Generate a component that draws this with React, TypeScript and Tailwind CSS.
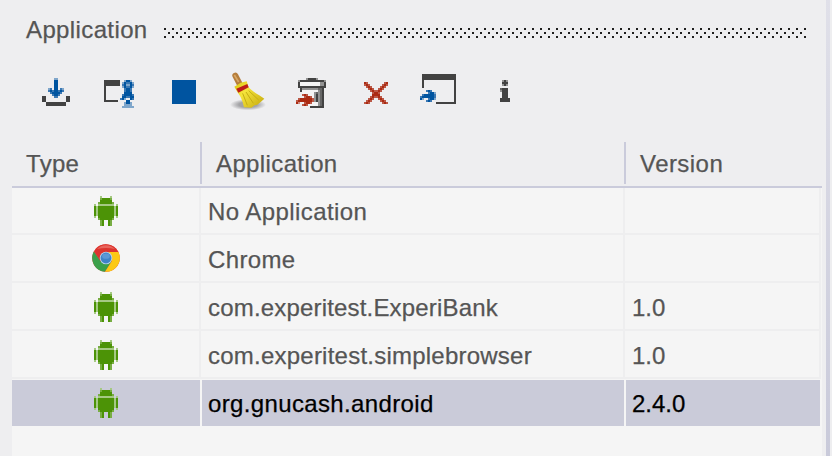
import React from "react";

const palette: Record<string, string> = {
  K: "#424242", k: "#666666", g: "#929292", w: "#f4f4f4",
  B: "#0054a0", b: "#3b78b3", l: "#7fa6cb",
  R: "#ab2a12", q: "#bb5846", r: "#cf8c80",
  G: "#4c9306", n: "#78ad43", m: "#a5c983",
};

function PixelIcon({ rows, className = "" }: { rows: string[]; className?: string }) {
  const width = Math.max(...rows.map((r) => r.length));
  return (
    <svg
      className={"shrink-0 " + className}
      width={width * 2}
      height={rows.length * 2}
      viewBox={`0 0 ${width} ${rows.length}`}
      shapeRendering="crispEdges"
      aria-hidden="true"
    >
      {rows.flatMap((row, y) =>
        [...row].map((c, x) =>
          palette[c] ? <rect key={x + "-" + y} x={x} y={y} width={1} height={1} fill={palette[c]} /> : null
        )
      )}
    </svg>
  );
}

const install = [
  "......ll......",
  "......BB......",
  "......BB......",
  "......BB......",
  "......BB......",
  "...lb.BB.bl...",
  "...bBbBBbBb...",
  "....bBBBBb....",
  ".....bBBb.....",
  "KK....bb....KK",
  "KK..........KK",
  "KK..........KK",
  "..KKKKKKKKKK..",
  "..KKKKKKKKKK..",
];
const instrument = [
  "KKKKKKKK..lBBl.",
  "KKKKKKKK.lBbbBl",
  "KKKKKKKK.bBllBb",
  "K........lBbbBl",
  "K.........bBBb.",
  "K.........bBBb.",
  "K.........BBBB.",
  "K........bBBBBb",
  "K........BBbbBB",
  "K.......bBl..Bb",
  "KKKKKKK....BB..",
  "..........lBBl.",
  "..........llll.",
  ".........llllll",
];
const uninstall = [
  ".....gKKKKg....",
  ".gKKKKKKKKKKKKg",
  ".KwwwwwwwwwwggK",
  ".KwwwwwwwwwwggK",
  ".KKKKKKKKKKKKKK",
  "..KggggggggkkK.",
  "..KwwwwwwwwgkK.",
  "...wwwwwwgkgkK.",
  "...qRqwwwgKgkK.",
  "....qRRqwgKgkK.",
  ".qRRRRRRqgKgkK.",
  "qRRRRRRRqgKgkK.",
  "Rr..qRRqwwwgkK.",
  "...qRqwwwwwgkK.",
  ".......KKKKKKK.",
];
const remove = [
  "Rq........qR",
  "qRq......qRq",
  ".qRq....qRq.",
  "..qRq..qRq..",
  "...qRqqRq...",
  "....qRRq....",
  "....RRRR....",
  "...qRqqRq...",
  "..qRq..qRq..",
  ".qRq....qRq.",
  "qRq......qRq",
];
const launch = [
  ".KKKKKKKKKKKKKKKKK",
  ".KKKKKKKKKKKKKKKKK",
  ".KKKKKKKKKKKKKKKKK",
  ".K...............K",
  ".K...............K",
  ".K...............K",
  ".K...............K",
  ".................K",
  "...bBb...........K",
  "....bBBl.........K",
  ".bBBBBBb.........K",
  "bBBBBBBb.........K",
  "Bl..bBBl.........K",
  "...bBb...........K",
  "........KKKKKKKKKK",
];
const info = [
  ".gKg.",
  ".KKK.",
  ".gKg.",
  ".....",
  "kKKK.",
  "gKKK.",
  ".KKK.",
  ".KKK.",
  ".KKK.",
  "KKKKK",
  "KKKKK",
];
const android = [
  "...m....m...",
  "...nGGGGn...",
  "...GGGGGG...",
  "..nGGGGGGn..",
  "m.mmmmmmmm.m",
  "GmGGGGGGGGmG",
  "GmGGGGGGGGmG",
  "GmGGGGGGGGmG",
  "GmGGGGGGGGmG",
  "GmGGGGGGGGmG",
  "m.GGGGGGGG.m",
  "..nGGGGGGn..",
  "...nG..Gn...",
  "...nG..Gn...",
  "...nG..Gn...",
];

function Broom() {
  return (
    <svg className="ml-7 -mt-2 shrink-0" width="36" height="42" viewBox="210 24 108 126" aria-hidden="true">
      <defs>
        <radialGradient id="shade">
          <stop offset="0.5" stopColor="#a3a3a6" />
          <stop offset="1" stopColor="#a3a3a6" stopOpacity="0" />
        </radialGradient>
        <linearGradient id="straw" x1="0" y1="0" x2="1" y2="0.8">
          <stop offset="0" stopColor="#d8c40c" />
          <stop offset="0.4" stopColor="#f5e43c" />
          <stop offset="1" stopColor="#cbb012" />
        </linearGradient>
      </defs>
      <ellipse cx="264" cy="128" rx="54" ry="17" fill="url(#shade)" />
      <path d="M226 41L238 64" stroke="#b57d3c" strokeWidth="18" strokeLinecap="round" />
      <path d="M223 39L236 60" stroke="#d8a765" strokeWidth="5" />
      <path d="M223 74L242 62L260 58L266 76C280 92 298 98 313 110L302 120L292 128L284 130L274 137L252 136C248 118 244 106 232 90Z" fill="url(#straw)" />
      <path d="M248 94L262 130M258 90L280 124M266 86L296 114" stroke="#c5ae14" strokeWidth="3" fill="none" />
      <path d="M229 80L262 66L266 76L235 92Z" fill="#bd1d19" />
    </svg>
  );
}

function Chrome() {
  return (
    <svg width="28" height="28" viewBox="-14 -14 28 28" aria-hidden="true">
      <circle r="13.8" fill="#e33b32" />
      <path d="M-12.2 -6.5A13.8 13.8 0 0 0 -1 13.8L5.6 3.3L-5.5 3.3Z" fill="#3ba04a" />
      <path d="M12.4 -6A13.8 13.8 0 0 1 -1 13.8L5.7 3.3L2.5 -6Z" fill="#fcc914" />
      <path d="M-11.5 -7.4A13.8 13.8 0 0 1 12.4 -6L0 -6L-6 2Z" fill="#dc342e" />
      <path d="M-9 -9A12.5 12.5 0 0 1 9 -9Q0 -11 -9 -9Z" fill="#e8655c" />
      <circle r="6.3" fill="#b9d1ea" />
      <circle r="5.4" fill="#3f83c8" />
      <ellipse cy="-1.8" rx="3.8" ry="2.6" fill="#5c98d6" />
    </svg>
  );
}

const apps = [
  { name: "No Application", version: "", spacing: "tracking-[0.42px]" },
  { name: "Chrome", version: "", spacing: "tracking-[0.35px]" },
  { name: "com.experitest.ExperiBank", version: "1.0", spacing: "tracking-[0.18px]" },
  { name: "com.experitest.simplebrowser", version: "1.0", spacing: "tracking-[0.23px]" },
];

export default function App() {
  return (
    <div className="flex h-[456px] w-[832px] overflow-hidden bg-[#eeeef0] font-['Liberation_Sans',Arial,sans-serif] text-[24px] leading-[28px] text-[#555] [-webkit-text-stroke:0.25px]">
      <main className="flex w-[822px] shrink-0 flex-col pl-3">
        <div className="flex h-[60px] items-center pl-3.5">
          <h1 className="w-[138px] shrink-0 tracking-[0.38px]">Application</h1>
          <svg className="mt-[6px]" width="642" height="10" shapeRendering="crispEdges" aria-hidden="true">
            <defs>
              <pattern id="dots" width="8" height="10" patternUnits="userSpaceOnUse">
                <path d="M0 0h2v2H0zM4 4h2v2H4zM0 8h2v2H0z" fill="#1e1e1e" />
              </pattern>
            </defs>
            <rect width="642" height="10" fill="url(#dots)" />
          </svg>
        </div>
        <div className="flex h-[82px] items-start pl-[30px] pt-[18px]">
          <PixelIcon rows={install} />
          <PixelIcon rows={instrument} className="ml-[34px] mt-0.5" />
          <div className="ml-[38px] mt-0.5 size-6 shrink-0 bg-[#0054a0]" />
          <div className="ml-[6px] flex"><Broom /></div>
          <PixelIcon rows={uninstall} className="ml-[30px]" />
          <PixelIcon rows={remove} className="ml-[38px] mt-1" />
          <PixelIcon rows={launch} className="ml-8 -mt-1" />
          <PixelIcon rows={info} className="ml-11 mt-0.5" />
        </div>
        <div className="flex h-[46px] border-b-2 border-[#cacbdb] leading-[44px]">
          <div className="w-[188px] pl-3.5 tracking-[0.3px]">Type</div>
          <div className="h-[42px] w-[424px] border-l-2 border-[#cacbdb] pl-3.5 tracking-[0.38px]">Application</div>
          <div className="h-[42px] border-l-2 border-[#cacbdb] pl-3.5 tracking-[0.45px]">Version</div>
        </div>
        <div className="flex-1 bg-[#f5f5f5]">
          {apps.map((app, i) => (
            <div key={app.name} className={(i === 0 ? "h-[47px]" : "h-12") + " flex w-[809px]"}>
              <div className="flex w-[189px] items-center justify-center border-b-2 border-r-2 border-[#eeeeef]">
                {app.name === "Chrome" ? <Chrome /> : <PixelIcon rows={android} className={i === 0 ? "mt-px" : "mt-0.5"} />}
              </div>
              <div className="flex w-[424px] items-end border-b-2 border-r-2 border-[#eeeeef] pb-[7px] pl-[7px]">
                <span className={app.spacing}>{app.name}</span>
              </div>
              <div className="flex flex-1 items-end border-b-2 border-r-2 border-[#eeeeef] pb-[7px] pl-[7px]">{app.version}</div>
            </div>
          ))}
          <div className="mt-px flex h-[46px] w-[808px] text-black">
            <div className="flex w-[188px] items-center justify-center bg-[#cacbd9]"><PixelIcon rows={android} /></div>
            <div className="ml-0.5 flex w-[422px] items-center bg-[#cacbd9] pl-1.5 pt-0.5 tracking-[0.36px]">org.gnucash.android</div>
            <div className="ml-0.5 flex flex-1 items-center bg-[#cacbd9] pl-1.5 pt-0.5">2.4.0</div>
          </div>
        </div>
      </main>
      <div className="ml-1 w-1 shrink-0 bg-gradient-to-b from-[#e0e0e9] to-[#c9cada]" />
    </div>
  );
}
